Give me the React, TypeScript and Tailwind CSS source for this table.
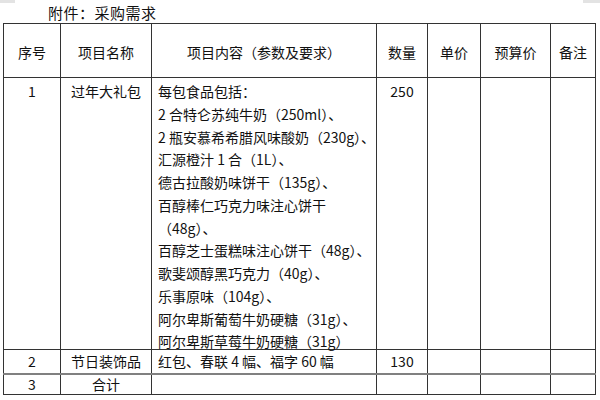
import React from 'react';

const items = [
  '每包食品包括：',
  '2 合特仑苏纯牛奶（250ml）、',
  '2 瓶安慕希希腊风味酸奶（230g）、',
  '汇源橙汁 1 合（1L）、',
  '德古拉酸奶味饼干（135g）、',
  '百醇棒仁巧克力味注心饼干',
  '（48g）、',
  '百醇芝士蛋糕味注心饼干（48g）、',
  '歌斐颂醇黑巧克力（40g）、',
  '乐事原味（104g）、',
  '阿尔卑斯葡萄牛奶硬糖（31g）、',
  '阿尔卑斯草莓牛奶硬糖（31g）',
];

const headers = ['序号', '项目名称', '项目内容（参数及要求）', '数量', '单价', '预算价', '备注'];
const widths = ['w-[57px]', 'w-[91px]', 'w-[225px]', 'w-[51px]', 'w-[53px]', 'w-[70px]', 'w-[45px]'];

const cell = 'border border-[#333] p-0';
const lastRow = `${cell} border-t-2 border-t-[#808080]`;

export default function App() {
  return (
    <div className="w-[600px] h-[400px] bg-white overflow-hidden text-[#111] font-['Noto_Sans_CJK_SC','Liberation_Sans',sans-serif]">
      <div className="flex justify-between h-[3px]">
        <div className="w-[15px] bg-[#e3e3e3]" />
        <div className="w-[17px] bg-[#e3e3e3]" />
      </div>
      <div className="pl-[48px] h-[20px] text-[15px] leading-[20px] tracking-[0.5px]">附件：采购需求</div>

      <table className="ml-[3px] w-[592px] table-fixed border-collapse text-[14px]">
        <colgroup>
          {widths.map((w, i) => (
            <col key={i} className={w} />
          ))}
        </colgroup>
        <tbody>
          <tr className="h-[54px]">
            {headers.map(h => (
              <td key={h} className={`${cell} pt-[3px] text-center align-middle whitespace-nowrap`}>
                {h}
              </td>
            ))}
          </tr>

          <tr>
            <td className={`${cell} text-center align-top pt-[2px] leading-[22.75px]`}>1</td>
            <td className={`${cell} text-center align-top pt-[2px] leading-[22.75px]`}>过年大礼包</td>
            <td className={`${cell} align-top`}>
              <div className="h-[271px] pt-[2px] pl-[6px] leading-[22.75px] whitespace-nowrap">
                {items.map(line => (
                  <div key={line}>{line}</div>
                ))}
              </div>
            </td>
            <td className={`${cell} text-center align-top pt-[2px] leading-[22.75px]`}>250</td>
            <td className={cell} />
            <td className={cell} />
            <td className={cell} />
          </tr>

          <tr className="h-[24px]">
            <td className={`${cell} text-center leading-[20px]`}>2</td>
            <td className={`${cell} text-center leading-[20px] whitespace-nowrap`}>节日装饰品</td>
            <td className={`${cell} pl-[6px] leading-[20px] whitespace-nowrap`}>红包、春联 4 幅、福字 60 幅</td>
            <td className={`${cell} text-center leading-[20px]`}>130</td>
            <td className={cell} />
            <td className={cell} />
            <td className={cell} />
          </tr>

          <tr className="h-[21px]">
            <td className={`${lastRow} text-center leading-[19px]`}>3</td>
            <td className={`${lastRow} text-center leading-[19px]`}>合计</td>
            <td className={lastRow} />
            <td className={lastRow} />
            <td className={lastRow} />
            <td className={lastRow} />
            <td className={lastRow} />
          </tr>
        </tbody>
      </table>
    </div>
  );
}
